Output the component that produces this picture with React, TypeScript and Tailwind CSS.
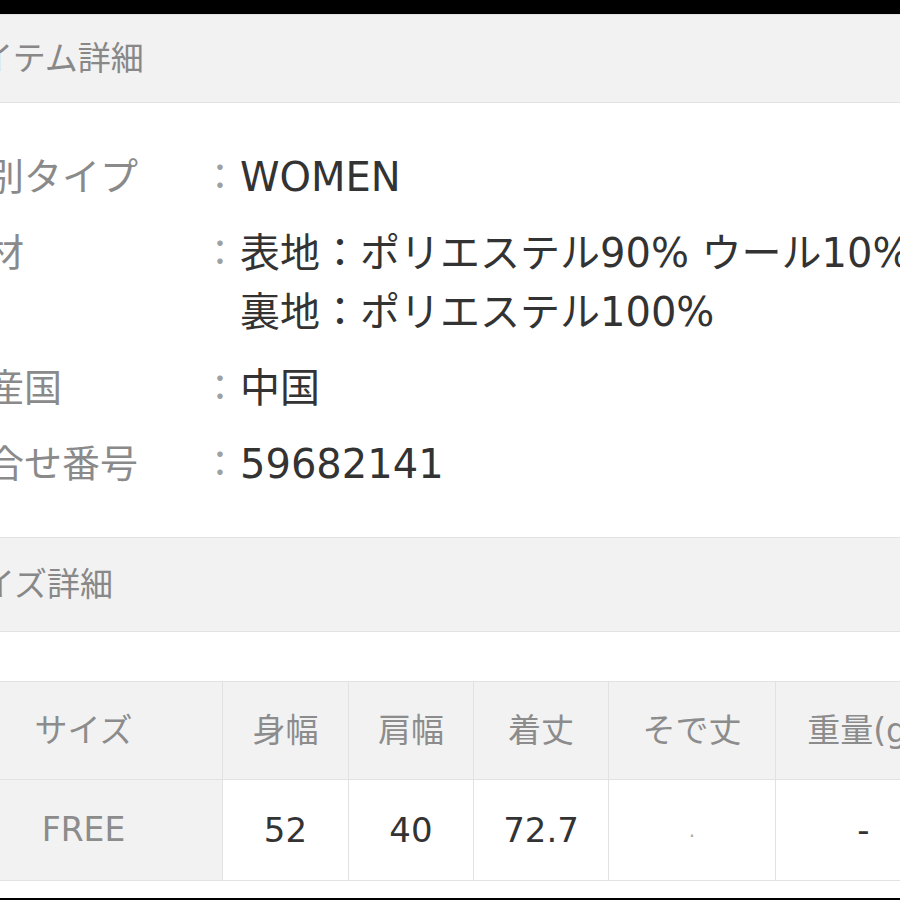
const font = "font-['DejaVu_Sans','Noto_Sans_CJK_JP',sans-serif]";

interface SpecRow {
  label: string;
  values: string[];
}

const specs: SpecRow[] = [
  { label: "性別タイプ", values: ["WOMEN"] },
  { label: "素材", values: ["表地：ポリエステル90% ウール10%", "裏地：ポリエステル100%"] },
  { label: "生産国", values: ["中国"] },
  { label: "問合せ番号", values: ["59682141"] },
];

const headCols = ["サイズ", "身幅", "肩幅", "着丈", "そで丈", "重量(g)"];
const colWidths = ["w-[278px]", "w-[126px]", "w-[125px]", "w-[135px]", "w-[167px]", "w-[176px]"];

const SectionHeader = ({ title, height }: { title: string; height: string }) => (
  <div className={`${height} flex items-center border-y border-[#e2e2e2] bg-[#f2f2f2]`}>
    <h2 className={`-ml-[51px] text-[33px] leading-none whitespace-nowrap text-[#888] ${font}`}>{title}</h2>
  </div>
);

export default function App() {
  return (
    <div className="flex h-[900px] w-[900px] flex-col overflow-hidden bg-black">
      <div className="h-[14px] shrink-0" />
      <div className="h-[884px] shrink-0 overflow-hidden bg-white">
        <SectionHeader title="アイテム詳細" height="h-[89px]" />

        <div className={`flex flex-col gap-[17px] pt-[45px] pb-[43px] ${font}`}>
          {specs.map((row) => (
            <div key={row.label} className="-ml-[52px] flex whitespace-nowrap">
              <div className="w-[252px] shrink-0 text-[38px] leading-[59px] text-[#8a8a8a]">{row.label}</div>
              <div className="w-[40px] shrink-0 text-center text-[36px] leading-[59px] text-[#a0a0a0]">：</div>
              <div className="flex flex-col">
                {row.values.map((v) => (
                  <span key={v} className="text-[40px] leading-[59px] text-[#333]">
                    {v}
                  </span>
                ))}
              </div>
            </div>
          ))}
        </div>

        <SectionHeader title="サイズ詳細" height="h-[95px]" />

        <div className="pt-[49px]">
          <table className={`-ml-[56px] w-[1007px] max-w-none table-fixed border-collapse ${font}`}>
            <thead>
              <tr className="h-[98px] bg-[#f2f2f2]">
                {headCols.map((c, i) => (
                  <th
                    key={c}
                    className={`${colWidths[i]} border border-[#e2e2e2] p-0 text-center text-[33px] font-normal whitespace-nowrap text-[#8c8c8c]`}
                  >
                    {c}
                  </th>
                ))}
              </tr>
            </thead>
            <tbody>
              <tr className="h-[101px]">
                <td className="border border-[#e2e2e2] bg-[#f2f2f2] p-0 text-center text-[33px] text-[#8c8c8c]">FREE</td>
                <td className="border border-[#e2e2e2] p-0 text-center text-[34px] text-[#333]">52</td>
                <td className="border border-[#e2e2e2] p-0 text-center text-[34px] text-[#333]">40</td>
                <td className="border border-[#e2e2e2] p-0 text-center text-[34px] text-[#333]">72.7</td>
                <td className="border border-[#e2e2e2] p-0 text-center text-[20px] text-[#aaa]">.</td>
                <td className="border border-[#e2e2e2] p-0 text-center text-[34px] text-[#333]">-</td>
              </tr>
            </tbody>
          </table>
        </div>
      </div>
    </div>
  );
}
